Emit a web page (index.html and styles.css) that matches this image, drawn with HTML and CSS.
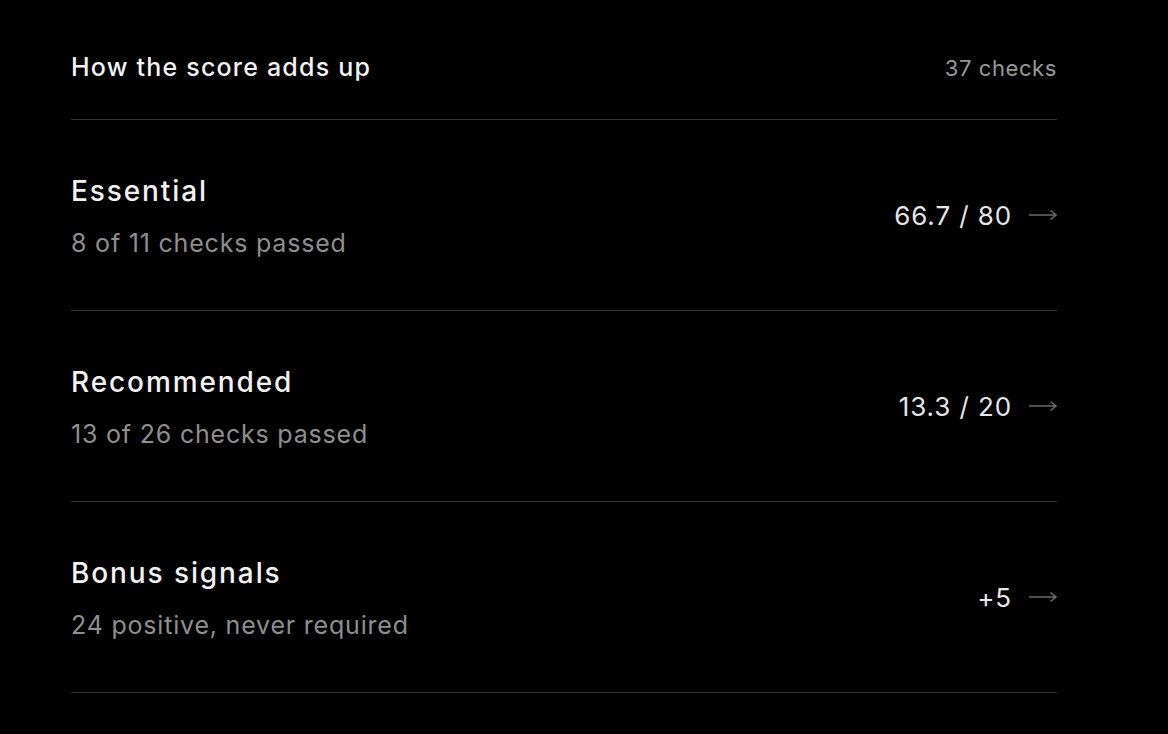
FILE: index.html
```html
<!DOCTYPE HTML>
<html>
<head>
  <meta charset="utf-8">
  <title>Score breakdown</title>
  <link rel="stylesheet" href="styles.css">
</head>
<body>
<section class="breakdown">
  <header class="breakdown-head">
    <h2>How the score adds up</h2>
    <span class="count">37 checks</span>
  </header>
  <a class="row" href="#essential">
    <div class="info">
      <h3>Essential</h3>
      <p>8 of 11 checks passed</p>
    </div>
    <div class="score">66.7 / 80
      <svg class="arrow" width="28" height="12" viewBox="0 0 28 12"><path d="M0 6H27M21.5 1.5L27 6L21.5 10.5"/></svg>
    </div>
  </a>
  <a class="row" href="#recommended">
    <div class="info">
      <h3>Recommended</h3>
      <p>13 of 26 checks passed</p>
    </div>
    <div class="score">13.3 / 20
      <svg class="arrow" width="28" height="12" viewBox="0 0 28 12"><path d="M0 6H27M21.5 1.5L27 6L21.5 10.5"/></svg>
    </div>
  </a>
  <a class="row" href="#bonus">
    <div class="info">
      <h3>Bonus signals</h3>
      <p>24 positive, never required</p>
    </div>
    <div class="score">+5
      <svg class="arrow" width="28" height="12" viewBox="0 0 28 12"><path d="M0 6H27M21.5 1.5L27 6L21.5 10.5"/></svg>
    </div>
  </a>
</section>
</body>
</html>
```

FILE: styles.css
```css
/*base*/
body{
	margin:0;
	padding:0;
	background:#000;
	color:#f2f2f2;
	font-family:Inter,"Noto Sans",sans-serif;
}
a{color:inherit;text-decoration:none;}

/*1.wrapper*/
.breakdown{
	width:986px;
	margin:0 0 0 71px;
}

/*2.header*/
.breakdown-head{
	display:flex;
	justify-content:space-between;
	align-items:center;
	padding:52px 0 36px;
	border-bottom:1px solid #333;
}
.breakdown-head h2{
	margin:0;
	font-size:25px;
	font-weight:500;
	line-height:31px;
	letter-spacing:1.2px;
}
.count{
	font-size:22px;
	letter-spacing:0.6px;
	color:#999;
}

/*3.rows*/
.row{
	display:flex;
	justify-content:space-between;
	align-items:center;
	height:190px;
	border-bottom:1px solid #333;
}
.info{
	padding-top:1px;
}
.info h3{
	margin:0;
	font-size:28px;
	font-weight:500;
	line-height:34px;
	letter-spacing:1.9px;
}
.info p{
	margin:21px 0 0;
	font-size:25px;
	line-height:29px;
	letter-spacing:0.8px;
	color:#8f8f8f;
}
.score{
	display:flex;
	align-items:center;
	gap:17px;
	font-size:26px;
	letter-spacing:0.9px;
	color:#e6e6e6;
}
.arrow{
	fill:none;
	stroke:#6a6a6a;
	stroke-width:1.6;
}
```
